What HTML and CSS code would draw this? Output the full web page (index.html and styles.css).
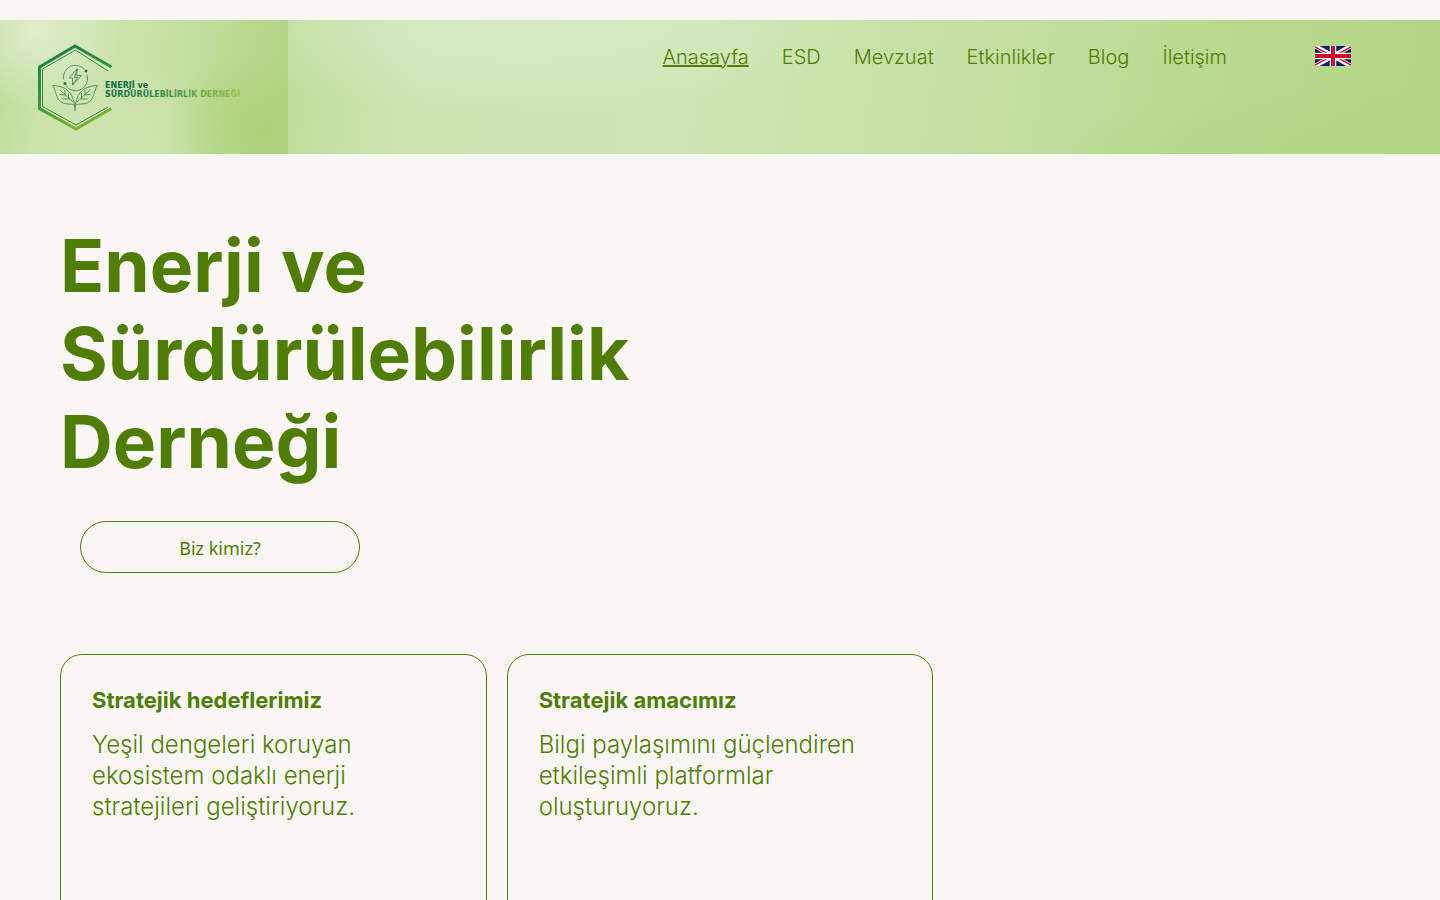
FILE: index.html
```
<!DOCTYPE html>
<html lang="tr">
  <head>
    <meta charset="UTF-8" />
    <meta name="viewport" content="width=device-width, initial-scale=1.0" />
    <title>Enerji ve Sürdürülebilirlik Derneği</title>
    <link rel="stylesheet" href="styles.css">
  </head>
  <body>
    <header class="site-header">
      <a href="#" class="logo" aria-label="Enerji ve Sürdürülebilirlik Derneği">
        <svg class="logo-art" viewBox="0 0 288 134" fill="none">
          <defs>
            <linearGradient id="hexGradient" x1="0" y1="0" x2="0.4" y2="1">
              <stop offset="0" stop-color="#14794a" />
              <stop offset="0.5" stop-color="#2f9048" />
              <stop offset="1" stop-color="#79b42c" />
            </linearGradient>
            <linearGradient id="textGradient" gradientUnits="userSpaceOnUse" x1="105" y1="0" x2="246" y2="0">
              <stop offset="0" stop-color="#0e6b4c" />
              <stop offset="0.45" stop-color="#3f9250" />
              <stop offset="1" stop-color="#a3c945" />
            </linearGradient>
          </defs>
          <!-- hexagon -->
          <path d="M111.500 47 L75 26 L39.500 47 V88.500 L76 109 L111.500 88.500" stroke="url(#hexGradient)" stroke-width="3" />
          <path d="M108 51 L75.500 30 L42.500 49 V86.500 L76 105 L108 87" stroke="#2f8a4b" stroke-width="1" />
          <g stroke="#3d7f56" stroke-width="0.800" stroke-linecap="round" stroke-linejoin="round">
            <!-- bolt in a cycle -->
            <path d="M63.500 59 A12 12 0 0 1 84.500 49.500" />
            <path d="M87 55 A12 12 0 0 1 66 66" />
            <path d="M77 49 L69 58 H72.500 V65 L81.500 55.500 H77 Z" />
            <path d="M77 49 L74.500 57.500 H77.500 L72.500 65" />
            <!-- leaves -->
            <path d="M75 90.500 C75 74 67 66 52.500 65.500 C57 71 55 84 68 84 C71 84 73 84 75 86" />
            <path d="M75 90.500 C75 74 83 66 97.500 65.500 C93 71 95 84 82 84 C79 84 77 84 75 86" />
            <path d="M60 70 L73 82 M65 70.500 V74.500 M68.500 73.500 V77.500 M60 74.500 L65 75 M63 79 L69.500 79" />
            <path d="M90 70 L77 82 M85 70.500 V74.500 M81.500 73.500 V77.500 M90 74.500 L85 75 M87 79 L80.500 79" />
          </g>
          <g fill="#17734b">
            <circle cx="86" cy="51" r="1.500" />
            <circle cx="65" cy="63.500" r="1.500" />
          </g>
          <text class="logo-text" x="105" y="68" fill="#0e6b4c">ENERJİ ve</text>
          <text class="logo-text" x="105" y="77" fill="url(#textGradient)">SÜRDÜRÜLEBİLİRLİK DERNEĞİ</text>
        </svg>
      </a>
      <div class="header-bar">
        <nav class="main-nav">
          <a href="#" class="active">Anasayfa</a>
          <a href="#">ESD</a>
          <a href="#">Mevzuat</a>
          <a href="#">Etkinlikler</a>
          <a href="#">Blog</a>
          <a href="#">İletişim</a>
        </nav>
        <a href="#" class="lang-link" aria-label="English">
          <svg class="flag" viewBox="0 0 36 20">
            <rect width="36" height="20" fill="#0b1f66" />
            <path d="M0 0 L36 20 M36 0 L0 20" stroke="#fff" stroke-width="4.500" />
            <path d="M0 0.800 L17 10.200 M19 9.800 L36 19.200 M36 0.800 L19 10.200 M17 9.800 L0 19.200" stroke="#c8102e" stroke-width="1.500" />
            <path d="M18 0 V20 M0 10 H36" stroke="#fff" stroke-width="6.500" />
            <path d="M18 0 V20 M0 10 H36" stroke="#c8102e" stroke-width="4" />
          </svg>
        </a>
      </div>
    </header>

    <main class="content">
      <section class="hero">
        <h1>Enerji ve Sürdürülebilirlik Derneği</h1>
        <a href="#" class="btn">Biz kimiz?</a>
      </section>

      <section class="cards">
        <article class="card">
          <h2>Stratejik hedeflerimiz</h2>
          <p>Yeşil dengeleri koruyan ekosistem odaklı enerji stratejileri geliştiriyoruz.</p>
        </article>
        <article class="card">
          <h2>Stratejik amacımız</h2>
          <p>Bilgi paylaşımını güçlendiren etkileşimli platformlar oluşturuyoruz.</p>
        </article>
      </section>
    </main>
  </body>
</html>
```
FILE: styles.css
```
:root {
  --green: #507d05;
  --background-color: #f8f7f4;
}

* {
  margin: 0;
  padding: 0;
  box-sizing: border-box;
}

body {
  font-family: Inter, sans-serif;
  background-color: var(--background-color);
  color: var(--green);
}

a {
  color: inherit;
  text-decoration: none;
}

.site-header {
  display: flex;
  margin-top: 20px;
}

.logo {
  width: 20%;
  background:
    radial-gradient(ellipse 35% 60% at 92% 82%, #abd177, transparent),
    radial-gradient(ellipse 30% 60% at 12% 8%, #e0edca, transparent),
    radial-gradient(ellipse 45% 60% at 40% 95%, #cfe5b0, transparent),
    linear-gradient(95deg, #bedd98 0%, #cde4ae 30%, #c7e1a4 55%, #b0d583 100%);
}

.logo-art {
  display: block;
  width: 100%;
}

.logo-text {
  font-family: "DejaVu Sans", sans-serif;
  font-size: 8px;
  font-weight: 700;
}

.header-bar {
  flex: 1;
  display: flex;
  justify-content: flex-end;
  align-items: flex-start;
  gap: 88px;
  padding: 23px 89px 0 24px;
  background:
    radial-gradient(ellipse 30% 70% at 20% 0%, #d9eac5, transparent),
    radial-gradient(ellipse 35% 50% at 100% 100%, #b1d484, transparent),
    linear-gradient(100deg, #bcdc99 0%, #cfe4b1 12%, #d0e5b3 35%, #c5dfa2 60%, #b8da8e 80%, #b2d684 100%);
}

.main-nav {
  display: flex;
  gap: 33px;
  font-size: 20px;
  font-weight: 300;
  line-height: 28px;
}

.main-nav .active {
  text-decoration: underline;
}

.lang-link {
  padding-top: 3px;
}

.flag {
  display: block;
  width: 36px;
  height: 20px;
}

.content {
  padding: 68px 60px 0;
}

.hero h1 {
  max-width: 660px;
  font-size: 73px;
  font-weight: 700;
  line-height: 88px;
}

.btn {
  display: block;
  width: 280px;
  margin: 35px 0 0 20px;
  padding: 13px 24px 11px;
  border: 1px solid var(--green);
  border-radius: 26px;
  font-family: "Noto Sans", sans-serif;
  font-size: 18px;
  line-height: 26px;
  text-align: center;
}

.cards {
  display: grid;
  grid-template-columns: repeat(3, 1fr);
  gap: 20px;
  margin-top: 81px;
}

.card {
  min-height: 320px;
  padding: 30px 31px;
  border: 1px solid var(--green);
  border-radius: 22px;
}

.card h2 {
  margin-bottom: 14px;
  font-size: 22px;
  font-weight: 700;
  line-height: 30px;
}

.card p {
  max-width: 330px;
  font-size: 24px;
  font-weight: 300;
  line-height: 31px;
}
```
